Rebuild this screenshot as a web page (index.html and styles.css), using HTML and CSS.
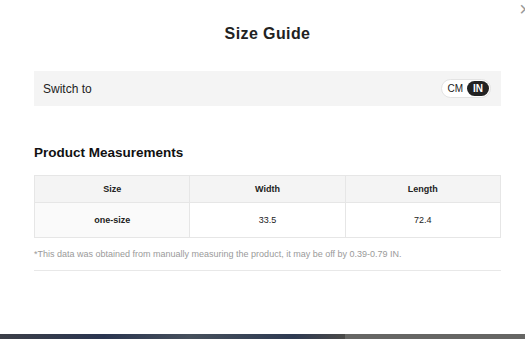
FILE: index.html
```html
<!DOCTYPE html>
<html lang="en">
<head>
    <meta charset="UTF-8">
    <meta name="viewport" content="width=device-width, initial-scale=1.0">
    <title>Size Guide</title>
    <link rel="stylesheet" href="styles.css">
</head>
<body>
    <div class="modal">
        <span class="close">&times;</span>
        <h1 class="title">Size Guide</h1>

        <div class="switch-bar">
            <span>Switch to</span>
            <div class="unit-toggle">
                <span class="unit">CM</span>
                <span class="unit active">IN</span>
            </div>
        </div>

        <h2 class="section-title">Product Measurements</h2>
        <table class="size-table">
            <tr>
                <th>Size</th>
                <th>Width</th>
                <th>Length</th>
            </tr>
            <tr>
                <td class="size-name">one-size</td>
                <td>33.5</td>
                <td>72.4</td>
            </tr>
        </table>
        <p class="note">*This data was obtained from manually measuring the product, it may be off by 0.39-0.79 IN.</p>
        <div class="divider"></div>
    </div>
    <div class="backdrop">
        <div class="photo"></div>
        <div class="grey"></div>
    </div>
</body>
</html>
```

FILE: styles.css
```css
body {
    margin: 0;
    font-family: "Liberation Sans", Arial, sans-serif;
    color: #222;
    background: #fff;
    overflow: hidden;
}
.modal {
    position: relative;
    height: 334px;
    padding: 0 24px 0 34px;
    box-sizing: border-box;
    background: #fff;
}
.close {
    position: absolute;
    top: -2px;
    right: -6px;
    font-size: 20px;
    color: #999;
}
.title {
    margin: 0;
    padding-top: 25px;
    height: 46px;
    box-sizing: border-box;
    text-align: center;
    font-size: 16px;
    font-weight: 900;
    letter-spacing: 0.4px;
}
.switch-bar {
    margin-top: 25px;
    height: 35px;
    display: flex;
    align-items: center;
    justify-content: space-between;
    padding: 0 10px 0 9px;
    background: #f4f4f4;
    font-size: 12px;
}
.unit-toggle {
    display: flex;
    align-items: center;
    height: 17px;
    padding: 0 1px 0 3px;
    border: 1px solid #e3e3e3;
    border-radius: 10px;
    background: #fff;
    font-size: 10px;
}
.unit {
    padding: 0 2px;
    line-height: 15px;
}
.unit.active {
    margin-left: 2px;
    padding: 0 6px;
    border-radius: 8px;
    background: #222;
    color: #fff;
    font-weight: bold;
}
.section-title {
    margin: 39px 0 0;
    height: 30px;
    font-size: 13.5px;
    font-weight: bold;
    color: #111;
}
.size-table {
    width: 100%;
    border-collapse: collapse;
    font-size: 9px;
    text-align: center;
}
.size-table th,
.size-table td {
    border: 1px solid #e6e6e6;
    width: 33.33%;
}
.size-table th {
    height: 24px;
    background: #f4f4f4;
    font-weight: bold;
}
.size-table td {
    height: 32px;
}
.size-table .size-name {
    font-weight: bold;
    background: #fafafa;
}
.note {
    margin: 11px 0 0;
    font-size: 9px;
    color: #9a9a9a;
}
.divider {
    margin-top: 11px;
    height: 1px;
    background: #e8e8e8;
}
.backdrop {
    display: flex;
    height: 5px;
}
.photo {
    width: 345px;
    background: linear-gradient(90deg, #3c3f48, #2a3550 30%, #46505c 55%, #2e3a52 85%, #4a4a48);
}
.grey {
    flex: 1;
    background: #666664;
}
```
